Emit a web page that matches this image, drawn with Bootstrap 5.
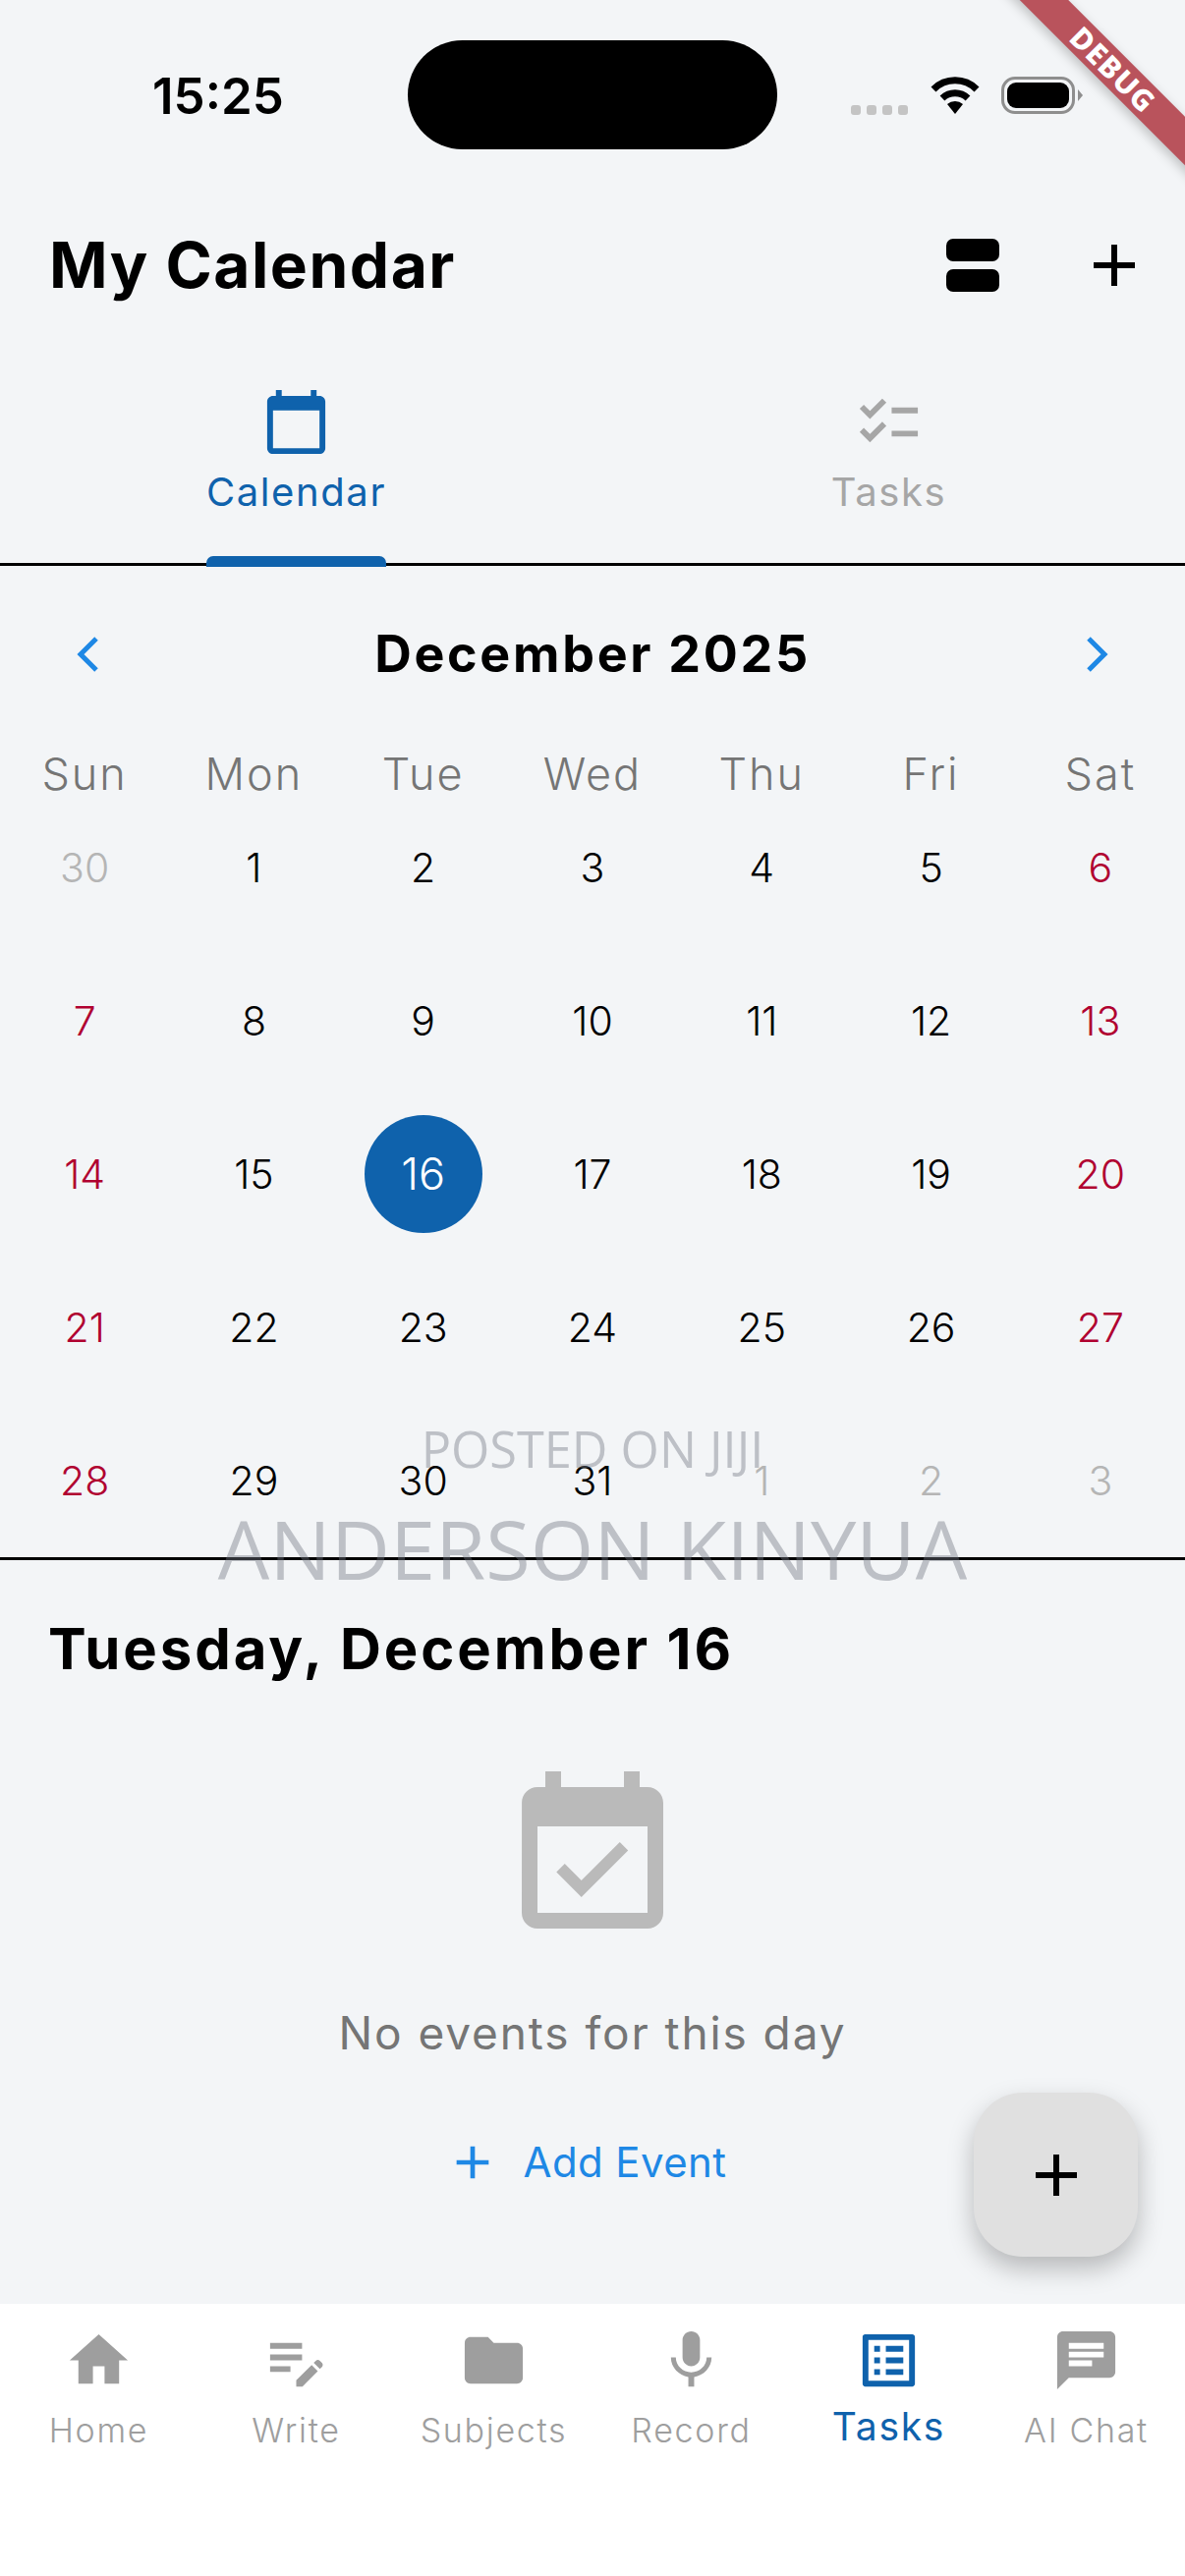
<!DOCTYPE html>
<html lang="en">

<head>
  <meta charset="UTF-8">
  <title>My Calendar</title>
  <link href="https://cdn.jsdelivr.net/npm/bootstrap@5.3.0/dist/css/bootstrap.min.css" rel="stylesheet">
  <style>
    body {
      background-color: #f3f5f7;
      font-family: Inter, "Noto Sans", sans-serif;
      color: #000;
      width: 1206px;
      height: 2622px;
      overflow: hidden;
    }

    svg { display: block; fill: currentColor; }

    .app-screen { position: relative; height: 2622px; overflow: hidden; }

    /* status bar */
    .status-bar { height: 180px; padding: 41px 0 0 155px; }
    .status-time { width: 260px; height: 111px; line-height: 114px; font-size: 51px; font-weight: 600; }
    .island { width: 376px; height: 111px; border-radius: 56px; background: #000; }
    .status-icons { margin-left: 75px; height: 111px; padding-top: 37px; }
    .sig-dots { width: 58px; margin-top: 29px; margin-right: 23px; }
    .sig-dots i { width: 10px; height: 10px; border-radius: 3px; background: #c4c4c4; }
    .wifi-icon { margin-right: 22px; }
    .batt { width: 75px; height: 38px; border: 3px solid #8e8e8e; border-radius: 14px; padding: 3px; }
    .batt i { display: block; height: 100%; border-radius: 9px; background: #000; }
    .batt-nub { width: 0; height: 0; margin: 13px 0 0 3px; border-left: 5px solid #8e8e8e; border-top: 6px solid transparent; border-bottom: 6px solid transparent; }

    .debug-flag {
      position: absolute;
      top: 53px;
      right: -77px;
      width: 300px;
      height: 35px;
      line-height: 35px;
      transform: rotate(45deg);
      background: #b9535c;
      color: #fff;
      font-family: "Noto Sans", sans-serif;
      font-size: 30px;
      font-weight: 800;
      letter-spacing: 1px;
      text-align: center;
      box-shadow: 0 4px 12px rgba(0, 0, 0, .22);
    }

    /* header */
    .top-head { height: 180px; padding: 0 50px; }
    .top-title { font-size: 64px; font-weight: 700; margin: 0; letter-spacing: 1.5px; }
    .head-plus { margin-left: 81px; margin-right: -14px; }

    /* tabs */
    .tab-strip { height: 216px; border-bottom: 3px solid #000; }
    .tab-item { position: relative; color: #a6a6a6; font-size: 40px; line-height: 48px; padding-top: 34px; letter-spacing: 1.6px; }
    .tab-item svg { margin: 0 auto 12px; }
    .tab-item.on { color: #0f62ac; }
    .tab-item.on::after {
      content: "";
      position: absolute;
      left: 50%;
      bottom: -4px;
      width: 183px;
      margin-left: -92px;
      height: 11px;
      border-radius: 7px 7px 0 0;
      background: #0f62ac;
    }

    /* calendar */
    .month-bar { height: 180px; padding: 0 55px; color: #1e88e5; }
    .month-name { color: #000; font-size: 52px; font-weight: 700; letter-spacing: 2.7px; }
    .month-chev { fill: none; stroke: currentColor; stroke-width: 5; }
    .week-row { height: 49px; padding-top: 8px; line-height: 48px; font-size: 45px; font-weight: 350; color: #757575; letter-spacing: 2px; }
    .day-row { height: 156px; }
    .day-cell { font-size: 41px; font-weight: 350; line-height: 156px; }
    .day-off { color: #b5b5b5; }
    .day-red { color: #b00030; }
    .day-pick { width: 120px; height: 120px; line-height: 120px; margin: 18px auto 0; border-radius: 50%; background: #0f62ac; color: #fff; font-size: 45px; }
    .cal-line { border-top: 3px solid #000; }

    .water-mark { position: absolute; left: 0; right: 0; font-family: "Open Sans", sans-serif; font-weight: 400; color: rgba(115, 120, 130, .42); text-align: center; }
    .wm-a { top: 1445px; font-size: 50.5px; line-height: 60px; }
    .wm-b { top: 1522px; font-size: 83px; line-height: 108px; }

    /* day section */
    .day-head { font-size: 58px; font-weight: 700; margin: 0; padding: 55px 49px 0; line-height: 70px; letter-spacing: 2.9px; }
    .empty-box { padding-top: 82px; color: #757575; }
    .empty-icon { color: #bababa; margin: 0 auto; }
    .empty-text { font-size: 46px; font-weight: 380; line-height: 60px; letter-spacing: 1.9px; margin-top: 52px; }
    .add-link { color: #1e88e5; font-size: 42px; line-height: 60px; margin-top: 72px; letter-spacing: .4px; padding: 0 14px 0 0; border: 0; }
    .add-link:hover { color: #1e88e5; }

    .fab-btn {
      position: absolute;
      left: 991px;
      top: 2130px;
      width: 167px;
      height: 167px;
      border: 0;
      border-radius: 50px;
      background: #e0e0e0;
      color: #000;
      box-shadow: 0 12px 26px rgba(0, 0, 0, .25);
    }

    /* bottom nav */
    .tab-foot { position: absolute; left: 0; right: 0; bottom: 0; height: 277px; background: #fff; padding-top: 22px; }
    .foot-item { color: #9e9e9e; font-size: 34px; font-weight: 350; line-height: 44px; letter-spacing: 1.7px; padding: 0; }
    .foot-item svg { margin: 0 auto 14px; }
    .foot-item.on { color: #0f62ac; font-size: 39px; font-weight: 400; }
    .foot-item.on svg { margin-bottom: 10px; }
  </style>
</head>

<body>
  <div class="app-screen">

    <div class="status-bar d-flex">
      <div class="status-time">15:25</div>
      <div class="island"></div>
      <div class="status-icons d-flex">
        <div class="sig-dots d-flex justify-content-between"><i></i><i></i><i></i><i></i></div>
        <svg class="wifi-icon" width="50" height="38" viewBox="0 0 50 38">
          <path d="M3 13 A31 31 0 0 1 47 13" fill="none" stroke="#000" stroke-width="7" />
          <path d="M12 22 A19 19 0 0 1 38 22" fill="none" stroke="#000" stroke-width="7" />
          <path d="M17 28 A12 12 0 0 1 33 28 L25 38 Z" />
        </svg>
        <div class="batt"><i></i></div>
        <div class="batt-nub"></div>
      </div>
    </div>

    <div class="debug-flag">DEBUG</div>

    <div class="top-head d-flex align-items-center">
      <h1 class="top-title me-auto">My Calendar</h1>
      <svg width="54" height="54" viewBox="0 0 54 54">
        <rect width="54" height="23" rx="7" />
        <rect y="31" width="54" height="23" rx="7" />
      </svg>
      <svg class="head-plus" width="72" height="72" viewBox="0 0 24 24">
        <path d="M19 13h-6v6h-2v-6H5v-2h6V5h2v6h6v2z" />
      </svg>
    </div>

    <div class="tab-strip row g-0 text-center">
      <div class="col tab-item on">
        <svg width="71" height="71" viewBox="0 0 24 24">
          <path d="M20 3h-1V1h-2v2H7V1H5v2H4c-1.1 0-2 .9-2 2v16c0 1.1.9 2 2 2h16c1.1 0 2-.9 2-2V5c0-1.1-.9-2-2-2zm0 18H4V8h16v13z" />
        </svg>
        Calendar
      </div>
      <div class="col tab-item">
        <svg width="71" height="71" viewBox="0 0 24 24">
          <path d="M22 7h-9v2h9V7zm0 8h-9v2h9v-2zM5.54 11 2 7.46l1.41-1.41 2.12 2.12 4.24-4.24 1.41 1.41L5.54 11zm0 8L2 15.46l1.41-1.41 2.12 2.12 4.24-4.24 1.41 1.41L5.54 19z" />
        </svg>
        Tasks
      </div>
    </div>

    <div class="month-bar d-flex align-items-center justify-content-between">
      <svg class="month-chev" width="70" height="70" viewBox="0 0 70 70"><path d="M43 19 27 35 43 51" /></svg>
      <div class="month-name">December 2025</div>
      <svg class="month-chev" width="70" height="70" viewBox="0 0 70 70"><path d="M27 19 43 35 27 51" /></svg>
    </div>

    <div class="week-row row g-0 text-center">
      <div class="col">Sun</div><div class="col">Mon</div><div class="col">Tue</div><div class="col">Wed</div><div class="col">Thu</div><div class="col">Fri</div><div class="col">Sat</div>
    </div>

    <div class="day-row row g-0 text-center">
      <div class="col day-cell day-off">30</div><div class="col day-cell">1</div><div class="col day-cell">2</div><div class="col day-cell">3</div><div class="col day-cell">4</div><div class="col day-cell">5</div><div class="col day-cell day-red">6</div>
    </div>
    <div class="day-row row g-0 text-center">
      <div class="col day-cell day-red">7</div><div class="col day-cell">8</div><div class="col day-cell">9</div><div class="col day-cell">10</div><div class="col day-cell">11</div><div class="col day-cell">12</div><div class="col day-cell day-red">13</div>
    </div>
    <div class="day-row row g-0 text-center">
      <div class="col day-cell day-red">14</div><div class="col day-cell">15</div><div class="col day-cell"><div class="day-pick">16</div></div><div class="col day-cell">17</div><div class="col day-cell">18</div><div class="col day-cell">19</div><div class="col day-cell day-red">20</div>
    </div>
    <div class="day-row row g-0 text-center">
      <div class="col day-cell day-red">21</div><div class="col day-cell">22</div><div class="col day-cell">23</div><div class="col day-cell">24</div><div class="col day-cell">25</div><div class="col day-cell">26</div><div class="col day-cell day-red">27</div>
    </div>
    <div class="day-row row g-0 text-center">
      <div class="col day-cell day-red">28</div><div class="col day-cell">29</div><div class="col day-cell">30</div><div class="col day-cell">31</div><div class="col day-cell day-off">1</div><div class="col day-cell day-off">2</div><div class="col day-cell day-off">3</div>
    </div>

    <div class="cal-line"></div>

    <h2 class="day-head">Tuesday, December 16</h2>

    <div class="empty-box text-center">
      <svg class="empty-icon" width="192" height="192" viewBox="0 0 24 24">
        <path d="M16.53 11.06L15.47 10l-4.88 4.88-2.12-2.12-1.06 1.06L10.59 17l5.94-5.94zM19 3h-1V1h-2v2H8V1H6v2H5c-1.11 0-1.99.9-1.99 2L3 19c0 1.1.89 2 2 2h14c1.1 0 2-.9 2-2V5c0-1.1-.9-2-2-2zm0 16H5V8h14v11z" />
      </svg>
      <div class="empty-text">No events for this day</div>
      <button type="button" class="btn add-link d-inline-flex align-items-center gap-4">
        <svg width="56" height="56" viewBox="0 0 24 24"><path d="M19 13h-6v6h-2v-6H5v-2h6V5h2v6h6v2z" /></svg>
        Add Event
      </button>
    </div>

    <div class="water-mark wm-a">POSTED ON JIJI</div>
    <div class="water-mark wm-b">ANDERSON KINYUA</div>

    <button type="button" class="fab-btn d-flex align-items-center justify-content-center">
      <svg width="72" height="72" viewBox="0 0 24 24"><path d="M19 13h-6v6h-2v-6H5v-2h6V5h2v6h6v2z" /></svg>
    </button>

    <nav class="tab-foot row g-0 text-center">
      <div class="col foot-item">
        <svg width="71" height="71" viewBox="0 0 24 24"><path d="M10 20v-6h4v6h5v-8h3L12 3 2 12h3v8z" /></svg>
        Home
      </div>
      <div class="col foot-item">
        <svg width="71" height="71" viewBox="0 0 24 24"><path d="M3 10h11v2H3v-2zm0-2h11V6H3v2zm0 8h7v-2H3v2zm15.01-3.13l.71-.71c.39-.39 1.02-.39 1.41 0l.71.71c.39.39.39 1.02 0 1.41l-.71.71-2.12-2.12zm-.71.71l-5.3 5.3V21h2.12l5.3-5.3-2.12-2.12z" /></svg>
        Write
      </div>
      <div class="col foot-item">
        <svg width="71" height="71" viewBox="0 0 24 24"><path d="M10 4H4c-1.1 0-1.99.9-1.99 2L2 18c0 1.1.9 2 2 2h16c1.1 0 2-.9 2-2V8c0-1.1-.9-2-2-2h-8l-2-2z" /></svg>
        Subjects
      </div>
      <div class="col foot-item">
        <svg width="71" height="71" viewBox="0 0 24 24"><path d="M12 14c1.66 0 2.99-1.34 2.99-3L15 5c0-1.66-1.34-3-3-3S9 3.34 9 5v6c0 1.66 1.34 3 3 3zm5.3-3c0 3-2.54 5.1-5.3 5.1S6.7 14 6.7 11H5c0 3.41 2.72 6.23 6 6.72V21h2v-3.28c3.28-.48 6-3.3 6-6.72h-1.7z" /></svg>
        Record
      </div>
      <div class="col foot-item on">
        <svg width="71" height="71" viewBox="0 0 24 24"><path d="M19 5v14H5V5h14m1.1-2H3.9c-.5 0-.9.4-.9.9v16.2c0 .4.4.9.9.9h16.2c.4 0 .9-.5.9-.9V3.9c0-.5-.5-.9-.9-.9zM11 7h6v2h-6V7zm0 4h6v2h-6v-2zm0 4h6v2h-6zM7 7h2v2H7zm0 4h2v2H7zm0 4h2v2H7z" /></svg>
        Tasks
      </div>
      <div class="col foot-item">
        <svg width="71" height="71" viewBox="0 0 24 24"><path d="M20 2H4c-1.1 0-1.99.9-1.99 2L2 22l4-4h14c1.1 0 2-.9 2-2V4c0-1.1-.9-2-2-2zM6 9h12v2H6V9zm8 5H6v-2h8v2zm4-6H6V6h12v2z" /></svg>
        AI Chat
      </div>
    </nav>

  </div>

  <script src="https://cdn.jsdelivr.net/npm/bootstrap@5.3.0/dist/js/bootstrap.bundle.min.js"></script>
</body>

</html>
